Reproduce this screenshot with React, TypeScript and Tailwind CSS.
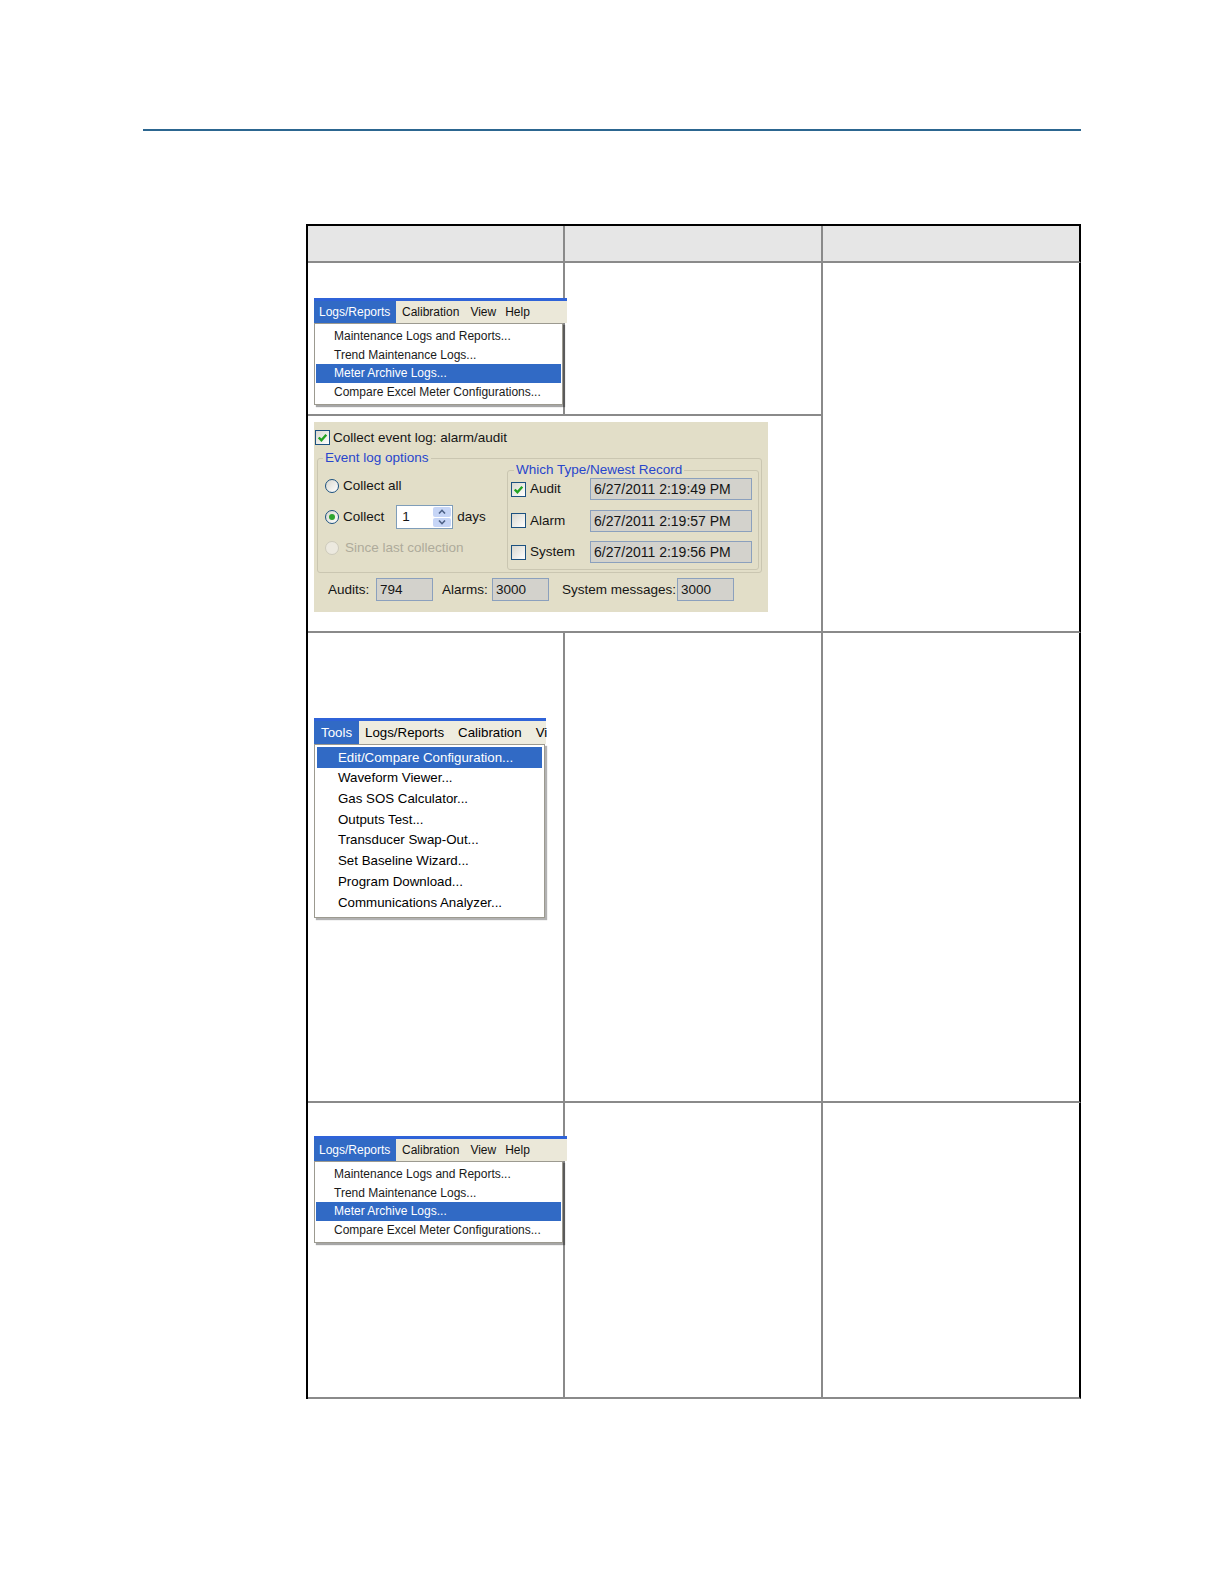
import React from "react"

function Check({ checked = false }: { checked?: boolean }) {
    return (
        <div className="flex h-[15px] w-[15px] shrink-0 items-center justify-center border border-[#1c5180] bg-linear-to-br from-[#d9d8cf] to-white">
            {checked && (
                <svg width="13" height="13" viewBox="0 0 12 12">
                    <path d="M2.5 6 L5 8.5 L9.5 3.5" stroke="#22a322" strokeWidth="2.2" fill="none" />
                </svg>
            )}
        </div>
    )
}

function Radio({ selected = false, disabled = false }: { selected?: boolean; disabled?: boolean }) {
    return (
        <div
            className={
                disabled
                    ? "flex h-[14px] w-[14px] shrink-0 items-center justify-center rounded-full border border-[#cdcabb] bg-[#ece9df]"
                    : "flex h-[14px] w-[14px] shrink-0 items-center justify-center rounded-full border border-[#1c5180] bg-linear-to-br from-[#d9d8cf] to-white"
            }
        >
            {selected && <div className="h-[6px] w-[6px] rounded-full bg-[#2ea52e]" />}
        </div>
    )
}

function Spinner() {
    return (
        <div className="ml-[12px] flex h-[24px] w-[57px] items-center border border-[#7f9db9] bg-white">
            <span className="flex-1 pl-[5px]">1</span>
            <div className="mr-px flex h-[20px] w-[18px] flex-col gap-px">
                <div className="flex flex-1 items-center justify-center rounded-[2px] bg-[#c6d5f6]">
                    <svg width="8" height="5" viewBox="0 0 8 5">
                        <path d="M1 4.5 L4 1.3 L7 4.5" stroke="#4d6185" strokeWidth="1.6" fill="none" />
                    </svg>
                </div>
                <div className="flex flex-1 items-center justify-center rounded-[2px] bg-[#c6d5f6]">
                    <svg width="8" height="5" viewBox="0 0 8 5">
                        <path d="M1 0.5 L4 3.7 L7 0.5" stroke="#4d6185" strokeWidth="1.6" fill="none" />
                    </svg>
                </div>
            </div>
        </div>
    )
}

function LogsMenu() {
    const items = [
        "Maintenance Logs and Reports...",
        "Trend Maintenance Logs...",
        "Meter Archive Logs...",
        "Compare Excel Meter Configurations...",
    ]
    return (
        <div className="relative z-10 w-[253px] text-[12px] leading-none">
            <div className="h-[3px] bg-[#2f63d8]" />
            <div className="flex h-[22px] items-center whitespace-nowrap bg-[#ebe8d9] text-[#111]">
                <div className="flex h-full w-[82px] shrink-0 items-center bg-[#316ac5] pl-[5px] text-white">Logs/Reports</div>
                <span className="ml-[6px]">Calibration</span>
                <span className="ml-[11px]">View</span>
                <span className="ml-[9px]">Help</span>
            </div>
            <div className="w-[249px] border border-[#9c9a90] bg-white px-px py-[3px] shadow-[2px_2px_1px_rgba(0,0,0,0.35)]">
                {items.map((item, i) => (
                    <div
                        key={i}
                        className={
                            i === 2
                                ? "flex h-[18.6px] items-center whitespace-nowrap bg-[#316ac5] pl-[18px] text-white"
                                : "flex h-[18.6px] items-center whitespace-nowrap pl-[18px] text-[#1a1a1a]"
                        }
                    >
                        {item}
                    </div>
                ))}
            </div>
        </div>
    )
}

function ToolsMenu() {
    const items = [
        "Edit/Compare Configuration...",
        "Waveform Viewer...",
        "Gas SOS Calculator...",
        "Outputs Test...",
        "Transducer Swap-Out...",
        "Set Baseline Wizard...",
        "Program Download...",
        "Communications Analyzer...",
    ]
    return (
        <div className="relative z-10 w-[232px] text-[13.3px] leading-none">
            <div className="h-[3px] bg-[#2f63d8]" />
            <div className="flex h-[23px] items-center whitespace-nowrap bg-[#eeecdf] text-black">
                <div className="flex h-full w-[45px] shrink-0 items-center bg-[#316ac5] pl-[7px] text-white">Tools</div>
                <span className="ml-[6px]">Logs/Reports</span>
                <span className="ml-[14px]">Calibration</span>
                <span className="ml-[14px]">Vi</span>
            </div>
            <div className="w-[231px] border border-[#9c9a90] bg-white px-[2px] pb-[4px] pt-[2px] shadow-[2px_2px_1px_rgba(0,0,0,0.3)]">
                {items.map((item, i) => (
                    <div
                        key={i}
                        className={
                            i === 0
                                ? "flex h-[20.7px] items-center whitespace-nowrap bg-[#316ac5] pl-[21px] text-white"
                                : "flex h-[20.7px] items-center whitespace-nowrap pl-[21px] text-black"
                        }
                    >
                        {item}
                    </div>
                ))}
            </div>
        </div>
    )
}

function EventPanel() {
    const records = [
        { name: "Audit", date: "6/27/2011 2:19:49 PM", checked: true },
        { name: "Alarm", date: "6/27/2011 2:19:57 PM", checked: false },
        { name: "System", date: "6/27/2011 2:19:56 PM", checked: false },
    ]
    return (
        <div className="h-[190px] w-[454px] bg-[#e2dec8] pt-[8px] text-[13.5px] leading-none text-[#151515]">
            {/* Top checkbox */}
            <div className="flex h-[15px] items-center pl-px">
                <Check checked />
                <span className="ml-[3px]">Collect event log: alarm/audit</span>
            </div>

            {/* Event log options */}
            <div className="relative ml-[3px] mt-[13px] h-[115px] w-[445px] rounded-[3px] border border-[#cac6b1]">
                <span className="absolute -top-[9px] left-[5px] bg-[#e2dec8] px-[2px] leading-[16px] text-[#2846cc]">Event log options</span>
                <div className="flex">
                    <div className="flex w-[189px] flex-col gap-[7px] pl-[7px] pt-[15px]">
                        <div className="flex h-[24px] items-center">
                            <Radio />
                            <span className="ml-[4px]">Collect all</span>
                        </div>
                        <div className="flex h-[24px] items-center">
                            <Radio selected />
                            <span className="ml-[4px]">Collect</span>
                            <Spinner />
                            <span className="ml-[4px]">days</span>
                        </div>
                        <div className="flex h-[24px] items-center text-[#aeab9b]">
                            <Radio disabled />
                            <span className="ml-[6px]">Since last collection</span>
                        </div>
                    </div>

                    {/* Which Type/Newest Record */}
                    <div className="relative mt-[11px] h-[100px] w-[252px] rounded-[3px] border border-[#cac6b1]">
                        <span className="absolute -top-[9px] left-[6px] bg-[#e2dec8] px-[2px] leading-[16px] text-[#2846cc]">Which Type/Newest Record</span>
                        <div className="flex flex-col gap-[9.5px] pl-[3px] pt-[7px]">
                            {records.map((r) => (
                                <div key={r.name} className="flex h-[22px] items-center">
                                    <Check checked={r.checked} />
                                    <span className="ml-[4px] w-[60px]">{r.name}</span>
                                    <div className="flex h-[22px] w-[162px] items-center border border-[#8ba0bd] bg-[#d3d2cc] pl-[3px] text-[14px]">{r.date}</div>
                                </div>
                            ))}
                        </div>
                    </div>
                </div>
            </div>

            {/* Counts */}
            <div className="mt-[5px] flex h-[23px] items-center pl-[14px]">
                <span className="w-[48px]">Audits:</span>
                <div className="flex h-[23px] w-[57px] items-center border border-[#8ba0bd] bg-[#d3d2cc] pl-[3px]">794</div>
                <span className="ml-[9px] w-[50px]">Alarms:</span>
                <div className="flex h-[23px] w-[57px] items-center border border-[#8ba0bd] bg-[#d3d2cc] pl-[3px]">3000</div>
                <span className="ml-[13px] w-[115px]">System messages:</span>
                <div className="flex h-[23px] w-[57px] items-center border border-[#8ba0bd] bg-[#d3d2cc] pl-[3px]">3000</div>
            </div>
        </div>
    )
}

export default function App() {
    return (
        <div className="h-[1584px] w-[1224px] overflow-hidden bg-white pt-[129px] font-['Liberation_Sans',Arial,sans-serif]">
            {/* Top rule */}
            <div className="ml-[143px] h-[2px] w-[938px] bg-[#2c6690]" />

            {/* Table */}
            <div className="ml-[306px] mt-[93px] grid w-[775px] grid-cols-[257px_258px_258px] grid-rows-[37px_153px_217px_470px_296px] border-l-2 border-t-2 border-black">
                {/* Header */}
                <div className="border-b-2 border-r-2 border-[#8a8a8a] bg-[#e6e6e6]" />
                <div className="border-b-2 border-r-2 border-[#8a8a8a] bg-[#e6e6e6]" />
                <div className="border-b-2 border-r-2 border-b-[#8a8a8a] border-r-black bg-[#e6e6e6]" />

                {/* Row 1 */}
                <div className="border-b-2 border-r-2 border-[#8a8a8a] pl-[6px] pt-[35px]">
                    <LogsMenu />
                </div>
                <div className="border-b-2 border-r-2 border-[#8a8a8a]" />
                <div className="row-span-2 border-b-2 border-r-2 border-b-[#8a8a8a] border-r-black" />
                <div className="col-span-2 border-b-2 border-r-2 border-[#8a8a8a] pl-[6px] pt-[6px]">
                    <EventPanel />
                </div>

                {/* Row 2 */}
                <div className="border-b-2 border-r-2 border-[#8a8a8a] pl-[6px] pt-[85px]">
                    <ToolsMenu />
                </div>
                <div className="border-b-2 border-r-2 border-[#8a8a8a]" />
                <div className="border-b-2 border-r-2 border-b-[#8a8a8a] border-r-black" />

                {/* Row 3 */}
                <div className="border-b-2 border-r-2 border-[#8a8a8a] pl-[6px] pt-[33px]">
                    <LogsMenu />
                </div>
                <div className="border-b-2 border-r-2 border-[#8a8a8a]" />
                <div className="border-b-2 border-r-2 border-b-[#8a8a8a] border-r-black" />
            </div>
        </div>
    )
}
